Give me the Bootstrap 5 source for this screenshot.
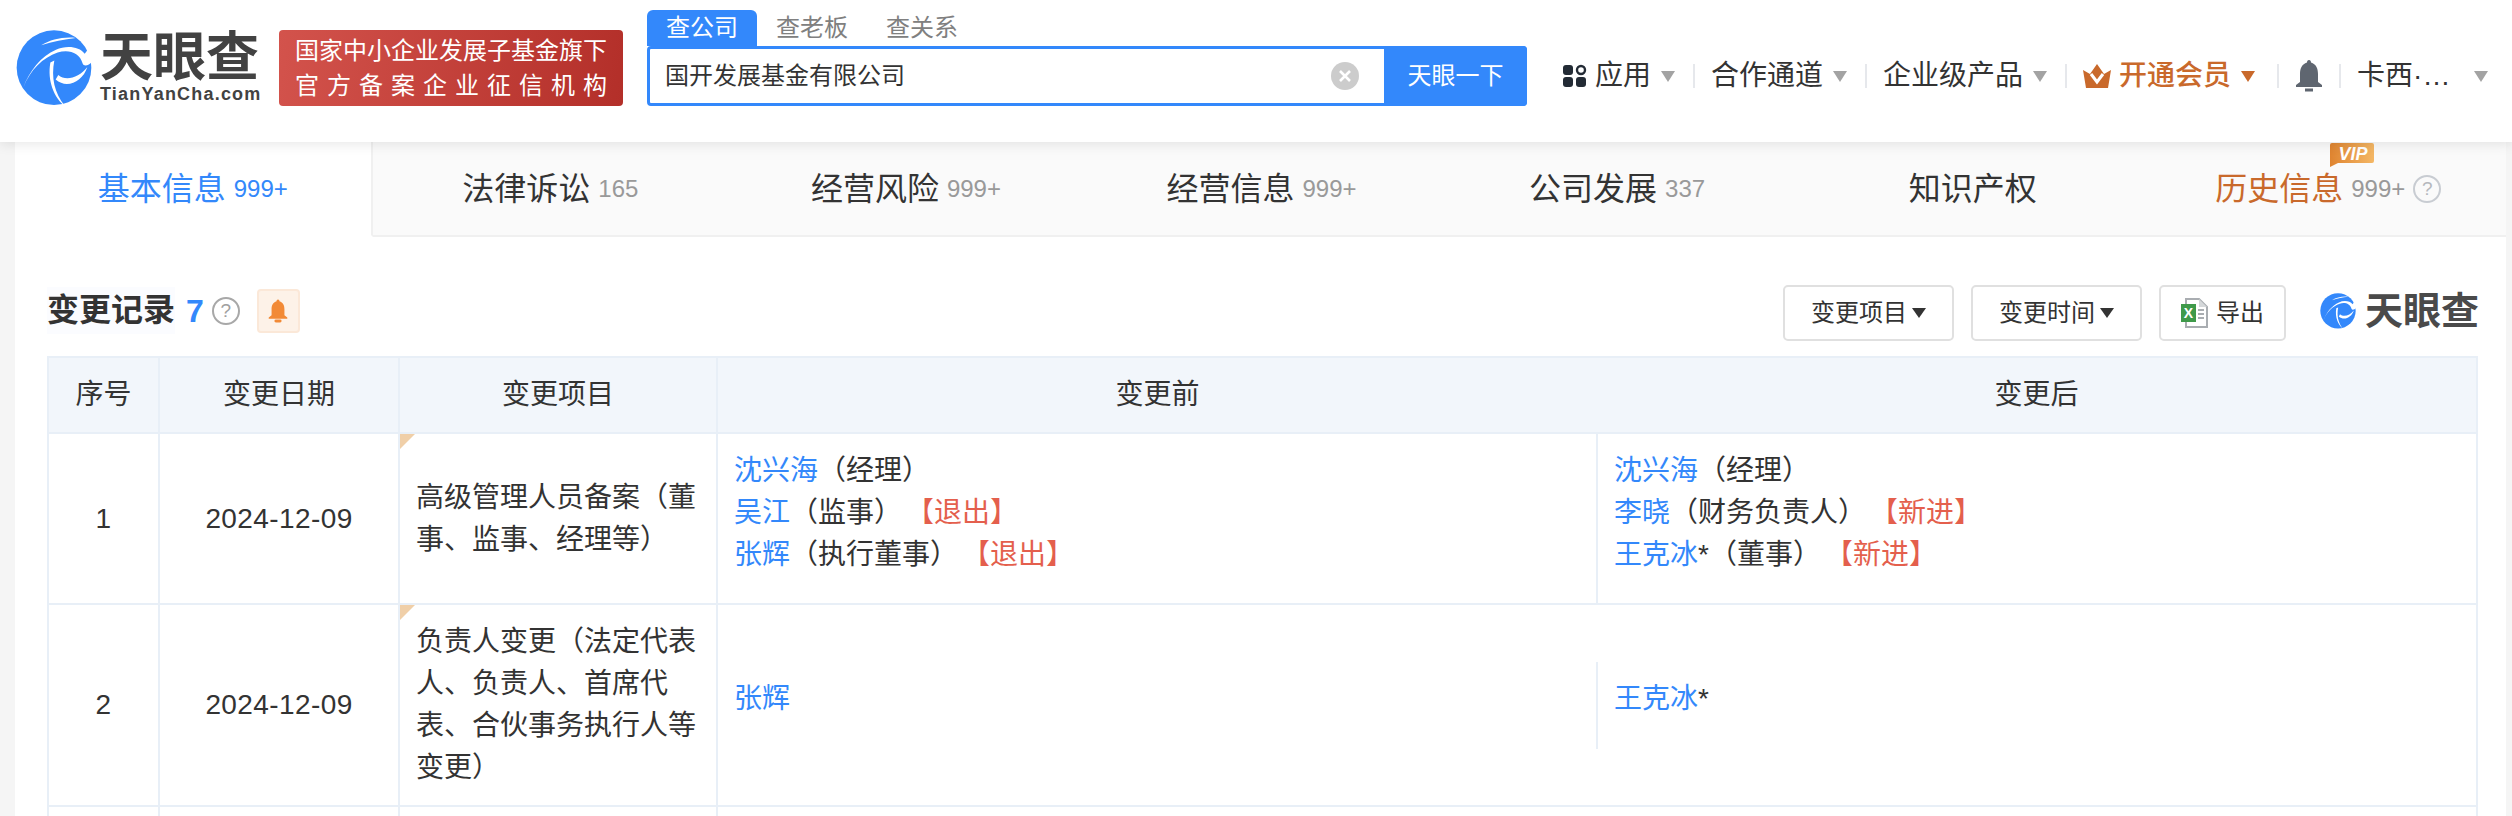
<!DOCTYPE html>
<html lang="zh-CN">
<head>
  <meta charset="UTF-8" />
  <meta name="viewport" content="width=device-width, initial-scale=1" />
  <title>变更记录 - 天眼查</title>
  <link rel="stylesheet" href="https://cdn.jsdelivr.net/npm/bootstrap@5.3.0/dist/css/bootstrap.min.css" />
  <style>
    html, body { height: 816px; overflow: hidden; }
    body { background: #f5f5f5; color: #333; font-family: "Liberation Sans", "Noto Sans CJK SC", sans-serif; font-size: 28px; }

    /* header */
    .top-bar { height: 142px; background: #fff; box-shadow: 0 2px 12px rgba(0,0,0,.1); position: relative; z-index: 2; padding-left: 16px; }
    .brand { width: 245px; margin-top: 30px; flex: none; }
    .brand-mark { width: 76px; height: 76px; flex: none; }
    .brand-name { font-size: 53px; font-weight: 700; line-height: 50px; color: #424242; letter-spacing: 0; margin-top: 3px; white-space: nowrap; }
    .brand-url { font-size: 18px; font-weight: 700; line-height: 22px; color: #424242; letter-spacing: 1.2px; white-space: nowrap; }
    .gov-tag { width: 344px; height: 76px; flex: none; margin: 30px 0 0 18px; border-radius: 4px; background: linear-gradient(100deg, #d3534c, #b32f29); color: #fff; font-size: 24px; line-height: 35px; text-align: center; padding-top: 3px; }
    .gov-tag .spaced { letter-spacing: 8px; margin-right: -8px; }
    .search-wrap { width: 880px; flex: none; margin: 10px 0 0 24px; }
    .search-tab { height: 36px; font-size: 24px; line-height: 36px; color: #808080; padding: 0 19px; border-radius: 6px 6px 0 0; }
    .search-tab.on { background: #3388fb; color: #fff; width: 110px; text-align: center; padding: 0; }
    .search-box { height: 60px; border: 3px solid #3388fb; border-radius: 4px; background: #fff; font-size: 24px; padding-left: 15px; }
    .clear-x { width: 28px; height: 28px; border-radius: 50%; background: #ccc; color: #fff; margin-right: 25px; flex: none; }
    .search-go { width: 143px; height: 60px; margin: -3px -3px -3px 0; background: #3388fb; color: #fff; border: 0; border-radius: 0 4px 4px 0; font-size: 24px; flex: none; }
    .top-menu { margin: 46px 0 0 20px; height: 60px; white-space: nowrap; flex: none; }
    .menu-item { height: 24px; padding: 0 18px 0 16px; }
    .menu-item.vip-item { padding-right: 22px; }
    .menu-item + .menu-item { border-left: 2px solid #e6e8ec; }
    .drop { width: 0; height: 0; border-left: 7.5px solid transparent; border-right: 7.5px solid transparent; border-top: 11px solid #a3a3a3; margin-left: 10px; flex: none; }
    .vip-text { color: #c9692b; font-weight: 500; }
    .drop.vip { border-top-color: #c9692b; }

    /* tabs */
    .page-main { margin: 0 6px 0 15px; background: #fff; height: 674px; overflow: hidden; }
    .tab-strip { height: 95px; background: #fafafa; border-bottom: 2px solid #f0f0f0; }
    .tab-cell { flex: 1 1 0; font-size: 32px; color: #333; position: relative; }
    .tab-cell.on { background: #fff; color: #3388fb; border-right: 2px solid #f0f0f0; border-bottom: 2px solid #fff; margin-bottom: -2px; }
    .tab-num { font-size: 24px; color: #999; margin-left: 8px; }
    .tab-cell.on .tab-num { color: #3388fb; }
    .tab-cell.hist { color: #c9692b; }
    .vip-flag { position: absolute; left: 115px; top: -22px; width: 44px; height: 24px; }
    .hint { width: 28px; height: 28px; border-radius: 50%; border: 2px solid #c8ccd2; color: #b5b8bd; font-size: 19px; line-height: 24px; text-align: center; margin-left: 8px; flex: none; }

    /* section */
    .sec-body { padding: 48px 28px 0 32px; }
    .sec-head { height: 56px; margin-bottom: 15px; }
    .lift { margin-bottom: 5px; }
    .sec-title { font-size: 32px; font-weight: 700; background: #fbfcff; height: 47px; line-height: 47px; }
    .sec-count { font-size: 32px; font-weight: 700; color: #3388fb; margin-left: 11px; }
    .hint.dark { border-color: #a8a8a8; color: #a0a0a0; }
    .bell-box { width: 43px; height: 44px; border: 2px solid #fbe8d8; background: #fdf2e8; border-radius: 4px; margin-left: 17px; }
    .act-btn { height: 56px; background: #fff; border: 2px solid #e0e0e0; border-radius: 5px; color: #333; font-size: 24px; padding: 0; width: 171px; margin-left: 17px; }
    .act-btn.short { width: 127px; }
    .act-drop { width: 0; height: 0; border-left: 7px solid transparent; border-right: 7px solid transparent; border-top: 10px solid #333; margin-left: 5px; }
    .mini-brand { margin-left: 34px; width: 158px; }
    .mini-brand .brand-name { font-size: 38px; line-height: 38px; margin: 0 0 0 9px; letter-spacing: 0; color: #4a4a4a; }

    /* table */
    .log-table { table-layout: fixed; width: 2431px; margin: 0; border-color: #e8eff7; color: #333; font-size: 28px; line-height: 42px; }
    .table.log-table > * > * > * { border-width: 2px; border-color: #e8eff7; padding: 16px 10px 16px 16px; vertical-align: middle; box-shadow: none; color: #333; }
    .table.log-table thead th { background: #f2f6fb; font-weight: 400; text-align: center; height: 76px; padding: 0; }
    .table.log-table .both-cell { padding: 0; }
    .table.log-table .mid-cell { padding-left: 10px; padding-right: 10px; letter-spacing: .4px; }
    .item-cell { position: relative; }
    .item-cell::before { content: ""; position: absolute; left: 0; top: 0; width: 15px; height: 15px; background: #f0cfa8; clip-path: polygon(0 0, 100% 0, 0 100%); }
    .side { flex: 1 1 0; padding: 16px 16px 27px; min-height: 87px; }
    .side + .side { border-left: 2px solid #e8eff7; }
    .log-table a { color: #3388fb; text-decoration: none; }
    .flag-out { color: #e45f4d; margin-left: 18px; }
  </style>
</head>
<body>
  <svg width="0" height="0" class="position-absolute">
    <symbol id="tyc-mark" viewBox="14 16 230 230">
      <circle cx="129" cy="130" r="113" fill="#3388fb" />
      <path fill="#fff" d="M90 62C120 45 155 36 195 40C160 44 125 50 90 62Z" />
      <path fill="#fff" d="M36 190C58 135 95 100 140 84C172 74 206 82 216 118C220 128 236 122 244 112L250 50L222 88C205 65 165 62 135 76C90 95 55 140 36 190Z" />
      <path fill="#fff" d="M130 108C120 160 130 205 162 246C130 222 108 170 118 114Z" />
      <path fill="#fff" d="M142 152C165 172 205 160 230 128C216 172 168 196 134 166Z" />
    </symbol>
  </svg>

  <header class="top-bar d-flex align-items-start">
    <div class="brand d-flex">
      <svg class="brand-mark"><use href="#tyc-mark" /></svg>
      <div class="ms-2">
        <div class="brand-name">天眼查</div>
        <div class="brand-url">TianYanCha.com</div>
      </div>
    </div>
    <div class="gov-tag">
      <div>国家中小企业发展子基金旗下</div>
      <div class="spaced">官方备案企业征信机构</div>
    </div>
    <div class="search-wrap">
      <div class="d-flex">
        <div class="search-tab on">查公司</div>
        <div class="search-tab">查老板</div>
        <div class="search-tab">查关系</div>
      </div>
      <div class="search-box d-flex align-items-center">
        <div class="flex-grow-1">国开发展基金有限公司</div>
        <div class="clear-x d-flex align-items-center justify-content-center">
          <svg width="14" height="14" viewBox="0 0 14 14"><path d="M2 2l10 10M12 2L2 12" stroke="#fff" stroke-width="2.6" /></svg>
        </div>
        <button class="search-go" type="button">天眼一下</button>
      </div>
    </div>
    <nav class="top-menu d-flex align-items-center">
      <div class="menu-item d-flex align-items-center">
        <svg width="24" height="24" viewBox="0 0 24 24" class="me-2">
          <rect x="0" y="1" width="10" height="10" rx="3" fill="#232b35" />
          <circle cx="18" cy="6" r="4" fill="none" stroke="#232b35" stroke-width="2.4" />
          <rect x="0" y="13" width="10" height="10" rx="3" fill="#232b35" />
          <rect x="13" y="13" width="10" height="10" rx="3" fill="#232b35" />
        </svg>
        <span>应用</span><i class="drop"></i>
      </div>
      <div class="menu-item d-flex align-items-center"><span>合作通道</span><i class="drop"></i></div>
      <div class="menu-item d-flex align-items-center"><span>企业级产品</span><i class="drop"></i></div>
      <div class="menu-item vip-item d-flex align-items-center">
        <svg width="28" height="24" viewBox="0 0 28 24" class="me-2">
          <path fill="#c9692b" d="M0 6l7 4 7-10 7 10 7-4-3 18H3z" />
          <path fill="none" stroke="#fff" stroke-width="3" d="M8 10l6 8 6-8" />
        </svg>
        <span class="vip-text">开通会员</span><i class="drop vip"></i>
      </div>
      <div class="menu-item d-flex align-items-center pe-3">
        <svg width="28" height="32" viewBox="0 0 28 32">
          <path fill="#5f6670" d="M14 0c1.400 0 2 1 2 2.400C21 4 23 8 23 14v8l4 3v2H1v-2l4-3v-8c0-6 2-10 7-11.600C12 1 12.600 0 14 0z" />
          <rect x="10" y="28.500" width="8" height="3" fill="#5f6670" />
        </svg>
      </div>
      <div class="menu-item d-flex align-items-center">
        <span>卡西·…</span><i class="drop ms-4"></i>
      </div>
    </nav>
  </header>

  <main class="page-main">
    <div class="tab-strip d-flex">
      <div class="tab-cell on d-flex align-items-center justify-content-center">基本信息<span class="tab-num">999+</span></div>
      <div class="tab-cell d-flex align-items-center justify-content-center">法律诉讼<span class="tab-num">165</span></div>
      <div class="tab-cell d-flex align-items-center justify-content-center">经营风险<span class="tab-num">999+</span></div>
      <div class="tab-cell d-flex align-items-center justify-content-center">经营信息<span class="tab-num">999+</span></div>
      <div class="tab-cell d-flex align-items-center justify-content-center">公司发展<span class="tab-num">337</span></div>
      <div class="tab-cell d-flex align-items-center justify-content-center">知识产权</div>
      <div class="tab-cell hist d-flex align-items-center justify-content-center">
        <div class="position-relative">历史信息
          <svg class="vip-flag" viewBox="0 0 44 24">
            <defs><linearGradient id="vipg" x1="0" x2="1"><stop offset="0" stop-color="#df8430" /><stop offset="1" stop-color="#f4b765" /></linearGradient></defs>
            <path fill="url(#vipg)" d="M2 0h40a2 2 0 0 1 2 2v16a2 2 0 0 1-2 2H8l-8 4V2a2 2 0 0 1 2-2z" />
            <text x="23" y="17" text-anchor="middle" fill="#fff" font-family="Liberation Sans" font-size="18" font-style="italic" font-weight="700">VIP</text>
          </svg>
        </div>
        <span class="tab-num">999+</span><span class="hint">?</span>
      </div>
    </div>

    <section class="sec-body">
      <div class="sec-head d-flex align-items-center">
        <div class="sec-title lift">变更记录</div>
        <div class="sec-count lift">7</div>
        <div class="hint dark ms-2 lift">?</div>
        <div class="bell-box lift d-flex align-items-center justify-content-center">
          <svg width="20" height="24" viewBox="0 0 28 32">
            <path fill="#f28a36" d="M14 0c1.400 0 2 1 2 2.400C21 4 23 8 23 14v8l4 3v2H1v-2l4-3v-8c0-6 2-10 7-11.600C12 1 12.600 0 14 0z" />
            <rect x="9" y="28" width="10" height="4" rx="2" fill="#f28a36" />
          </svg>
        </div>
        <div class="ms-auto d-flex align-items-center">
          <button class="act-btn d-flex align-items-center justify-content-center" type="button">变更项目<i class="act-drop"></i></button>
          <button class="act-btn d-flex align-items-center justify-content-center" type="button">变更时间<i class="act-drop"></i></button>
          <button class="act-btn short d-flex align-items-center justify-content-center" type="button">
            <svg width="27" height="30" viewBox="0 0 27 30" class="me-2">
              <path fill="#fff" stroke="#a9adb1" stroke-width="2" d="M5 1h13l8 8v20H5z" />
              <path fill="#d5d8da" d="M18 1v8h8z" />
              <rect x="0" y="6" width="15" height="18" fill="#3f9a4a" />
              <text x="7.500" y="20" text-anchor="middle" fill="#fff" font-family="Liberation Sans" font-size="14" font-weight="700">X</text>
              <path stroke="#a9adb1" stroke-width="2" d="M17 12h6M17 16h6M17 20h6" />
            </svg>
            导出
          </button>
          <div class="mini-brand lift d-flex align-items-center">
            <svg width="36" height="40" class="flex-shrink-0"><use href="#tyc-mark" /></svg>
            <div class="brand-name">天眼查</div>
          </div>
        </div>
      </div>

      <table class="table table-bordered log-table">
        <colgroup>
          <col style="width:111px" /><col style="width:240px" /><col style="width:318px" /><col />
        </colgroup>
        <thead>
          <tr>
            <th>序号</th>
            <th>变更日期</th>
            <th>变更项目</th>
            <th>
              <div class="d-flex">
                <div class="flex-fill w-50">变更前</div>
                <div class="flex-fill w-50">变更后</div>
              </div>
            </th>
          </tr>
        </thead>
        <tbody>
          <tr>
            <td class="text-center mid-cell">1</td>
            <td class="text-center mid-cell">2024-12-09</td>
            <td class="item-cell">高级管理人员备案（董事、监事、经理等）</td>
            <td class="both-cell">
              <div class="d-flex align-items-center">
                <div class="side">
                  <div><a href="#">沈兴海</a>（经理）</div>
                  <div><a href="#">吴江</a>（监事）<span class="flag-out">【退出】</span></div>
                  <div><a href="#">张辉</a>（执行董事）<span class="flag-out">【退出】</span></div>
                </div>
                <div class="side">
                  <div><a href="#">沈兴海</a>（经理）</div>
                  <div><a href="#">李晓</a>（财务负责人）<span class="flag-out">【新进】</span></div>
                  <div><a href="#">王克冰</a>*（董事）<span class="flag-out">【新进】</span></div>
                </div>
              </div>
            </td>
          </tr>
          <tr>
            <td class="text-center mid-cell">2</td>
            <td class="text-center mid-cell">2024-12-09</td>
            <td class="item-cell">负责人变更（法定代表人、负责人、首席代表、合伙事务执行人等变更）</td>
            <td class="both-cell">
              <div class="d-flex align-items-center">
                <div class="side"><a href="#">张辉</a></div>
                <div class="side"><a href="#">王克冰</a>*</div>
              </div>
            </td>
          </tr>
          <tr>
            <td class="mid-cell">&nbsp;</td><td></td><td></td><td></td>
          </tr>
        </tbody>
      </table>
    </section>
  </main>
</body>
</html>
